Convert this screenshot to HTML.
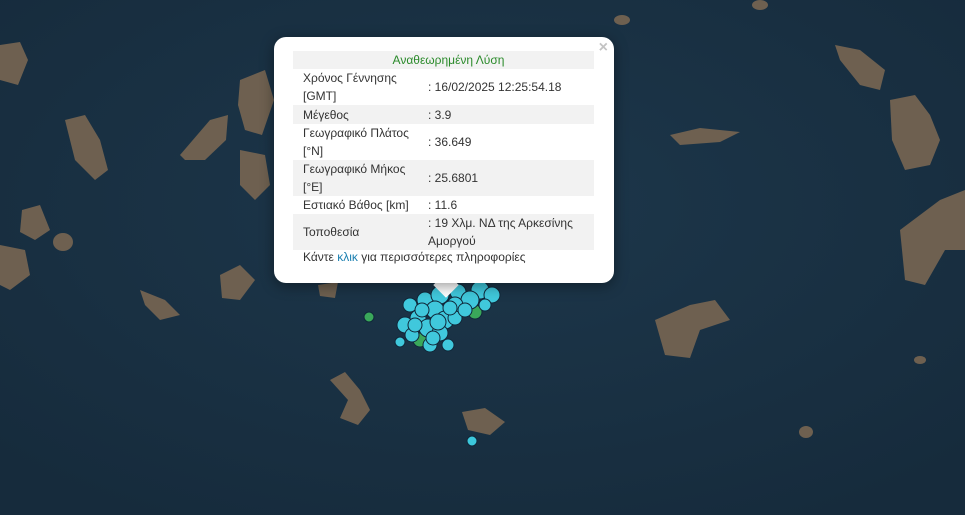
<!DOCTYPE html>
<html><head><meta charset="utf-8"><style>
body{margin:0;width:965px;height:515px;overflow:hidden;background:#1c3448;font-family:"Liberation Sans",Arial,sans-serif;position:relative}
svg{position:absolute;left:0;top:0}
.pop{position:absolute;left:274px;top:37px;width:340px;height:246px;background:#fff;border-radius:12px;box-shadow:0 3px 14px rgba(0,0,0,.4)}
.tip{position:absolute;left:437px;top:276px;width:18px;height:18px;background:#fff;transform:rotate(45deg)}
.x{position:absolute;right:6px;top:2px;color:#c3c3c3;font-size:16px;font-weight:bold}
table{position:absolute;left:19px;top:14px;width:301px;border-collapse:collapse;font-size:12px;color:#333;line-height:18px}
td{padding:0 0 0 10px;vertical-align:middle}
tr.g{background:#f2f2f2}
.h{text-align:center;color:#2a8a2a;height:18px}
.f{position:absolute;left:29px;top:213px;font-size:12px;color:#333}
.f span{color:#1a7fb0}
</style></head><body>
<svg width="965" height="515">
<defs><radialGradient id="sea" cx="50%" cy="40%" r="70%"><stop offset="0" stop-color="#1d374b"/><stop offset="1" stop-color="#162b3c"/></radialGradient></defs>
<rect width="965" height="515" fill="url(#sea)"/>
<g fill="#6e6050">
<path d="M0 45 L20 42 L28 60 L18 85 L0 80Z"/>
<path d="M65 120 L85 115 L100 140 L108 170 L95 180 L75 160Z"/>
<path d="M22 210 L40 205 L50 230 L35 240 L20 232Z"/>
<ellipse cx="63" cy="242" rx="10" ry="9"/>
<path d="M0 245 L25 250 L30 275 L10 290 L0 285Z"/>
<path d="M140 290 L165 300 L180 315 L160 320 L145 305Z"/>
<path d="M220 275 L240 265 L255 280 L240 300 L222 298Z"/>
<path d="M180 155 L210 120 L228 115 L226 140 L205 160 L185 160Z"/>
<path d="M240 80 L265 70 L274 100 L262 135 L245 130 L238 105Z"/>
<path d="M240 150 L265 155 L270 185 L255 200 L240 185Z"/>
<path d="M318 285 L338 282 L335 298 L320 296Z"/>
<path d="M835 45 L860 50 L885 70 L880 90 L860 85 L840 60Z"/>
<path d="M890 100 L915 95 L930 115 L940 140 L930 165 L905 170 L892 140Z"/>
<path d="M900 230 L940 200 L965 190 L965 250 L945 250 L925 285 L905 280Z"/>
<path d="M655 320 L690 305 L715 300 L730 320 L700 330 L690 358 L665 355Z"/>
<path d="M670 135 L700 128 L740 132 L720 142 L680 145Z"/>
<path d="M330 380 L345 372 L360 390 L370 410 L358 425 L340 418 L348 400Z"/>
<path d="M462 412 L485 408 L505 422 L490 435 L468 430Z"/>
<ellipse cx="806" cy="432" rx="7" ry="6"/>
<ellipse cx="920" cy="360" rx="6" ry="4"/>
<ellipse cx="760" cy="5" rx="8" ry="5"/>
<ellipse cx="622" cy="20" rx="8" ry="5"/>
</g>
<g stroke="#10283a" stroke-width="1">
<circle cx="369" cy="317" r="5" fill="#3aa85a"/>
<circle cx="472" cy="441" r="5" fill="#3cc8dc"/>
<circle cx="420" cy="340" r="7" fill="#3aa85a"/>
<circle cx="475" cy="312" r="7" fill="#3aa85a"/>
<g fill="#40c8dc">
<circle cx="410" cy="305" r="7"/><circle cx="425" cy="300" r="8"/><circle cx="440" cy="295" r="9"/><circle cx="458" cy="292" r="8"/><circle cx="480" cy="290" r="9"/><circle cx="492" cy="295" r="8"/>
<circle cx="470" cy="300" r="9"/><circle cx="455" cy="305" r="8"/><circle cx="435" cy="310" r="9"/><circle cx="418" cy="318" r="8"/><circle cx="405" cy="325" r="8"/>
<circle cx="445" cy="320" r="9"/><circle cx="428" cy="328" r="9"/><circle cx="412" cy="335" r="7"/><circle cx="440" cy="333" r="8"/><circle cx="455" cy="318" r="7"/>
<circle cx="465" cy="310" r="7"/><circle cx="400" cy="342" r="5"/><circle cx="430" cy="345" r="7"/><circle cx="485" cy="305" r="6"/><circle cx="448" cy="345" r="6"/>
<circle cx="415" cy="325" r="7"/><circle cx="438" cy="322" r="8"/><circle cx="450" cy="308" r="7"/><circle cx="422" cy="310" r="7"/><circle cx="433" cy="338" r="7"/>
</g></g>
</svg>
<div class="tip"></div>
<div class="pop"><div class="x">×</div>
<table>
<tr class="g"><td colspan="2" class="h">Αναθεωρημένη Λύση</td></tr>
<tr style="height:36px"><td style="width:115px">Χρόνος Γέννησης [GMT]</td><td>: 16/02/2025 12:25:54.18</td></tr>
<tr class="g" style="height:19px"><td>Μέγεθος</td><td>: 3.9</td></tr>
<tr style="height:36px"><td>Γεωγραφικό Πλάτος [°N]</td><td>: 36.649</td></tr>
<tr class="g" style="height:36px"><td>Γεωγραφικό Μήκος [°E]</td><td>: 25.6801</td></tr>
<tr style="height:18px"><td>Εστιακό Βάθος [km]</td><td>: 11.6</td></tr>
<tr class="g" style="height:36px"><td>Τοποθεσία</td><td>: 19 Χλμ. ΝΔ της Αρκεσίνης Αμοργού</td></tr>
</table>
<div class="f">Κάντε <span>κλικ</span> για περισσότερες πληροφορίες</div>
</div>
</body></html>
